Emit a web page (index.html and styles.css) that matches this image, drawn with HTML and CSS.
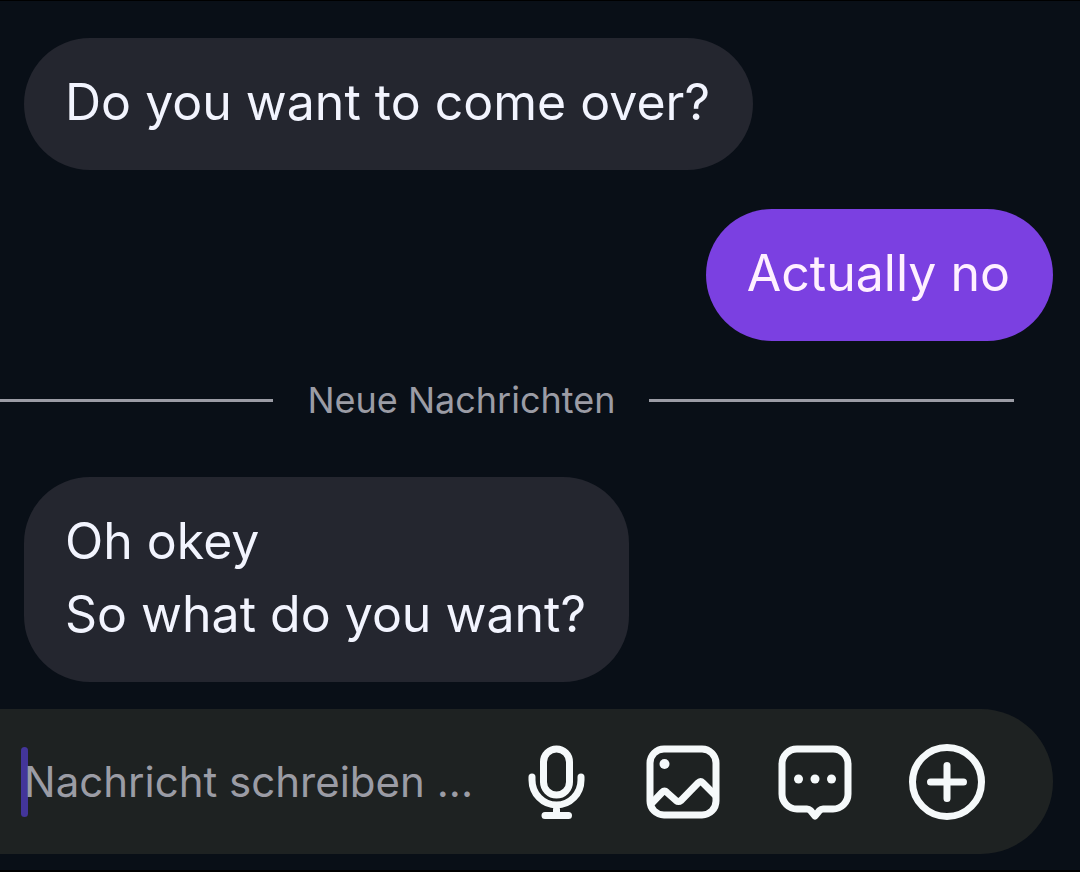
FILE: index.html
```html
<!DOCTYPE html>
<html lang="de">

<head>
    <meta charset="UTF-8">
    <meta name="viewport" content="width=device-width, initial-scale=1.0">
    <title>Chat</title>
    <link rel="stylesheet" href="styles.css">
</head>

<body>
    <main class="chat">
        <div class="message received">
            <p>Do you want to come over?</p>
        </div>
        <div class="message sent">
            <p>Actually no</p>
        </div>
        <div class="divider">
            <span>Neue Nachrichten</span>
        </div>
        <div class="message received">
            <p>Oh okey</p>
            <p>So what do you want?</p>
        </div>
    </main>
    <form class="composer">
        <div class="field">
            <span class="caret"></span>
            <input type="text" placeholder="Nachricht schreiben ..." aria-label="Nachricht schreiben">
        </div>
        <div class="actions">
            <button type="button" aria-label="Sprachnachricht">
                <svg width="64" height="76" viewBox="0 0 64 76">
                    <rect x="18.5" y="5" width="26" height="46" rx="13" />
                    <path d="M7 33v3a24.5 25 0 0 0 49 0v-3M31.5 61v10M20 71.5h23.5" />
                </svg>
            </button>
            <button type="button" aria-label="Bild">
                <svg width="76" height="76" viewBox="0 0 76 76">
                    <rect x="5" y="5" width="66" height="66" rx="14" />
                    <path d="M6 60L17 48.500q2.500-2.500 5 0L31 56.500q2.500 2 5 0L53 39q2.500-2.500 5 0L70 51" />
                    <circle class="dot" cx="19.5" cy="20" r="5" />
                </svg>
            </button>
            <button type="button" aria-label="Vorlagen">
                <svg width="76" height="76" viewBox="0 0 76 76">
                    <path d="M20 5h36a15 15 0 0 1 15 15v30a15 15 0 0 1-15 15H46q-2 0-3.500 1.500L38 72l-4.500-5.500Q32 65 30 65H20A15 15 0 0 1 5 50V20A15 15 0 0 1 20 5z" />
                    <circle class="dot" cx="21.5" cy="35" r="4.5" />
                    <circle class="dot" cx="38" cy="35" r="4.5" />
                    <circle class="dot" cx="54.5" cy="35" r="4.5" />
                </svg>
            </button>
            <button type="button" aria-label="Mehr">
                <svg width="76" height="76" viewBox="0 0 76 76">
                    <circle cx="38" cy="38" r="34.5" />
                    <path d="M38 21.500v33M21.500 38h33" />
                </svg>
            </button>
        </div>
    </form>
</body>

</html>
```

FILE: styles.css
```css
* {
    box-sizing: border-box;
}

body {
    margin: 0;
    min-height: 100vh;
    border-top: 1px solid #000;
    border-bottom: 2px solid #000;
    background-color: #090f17;
    color: #f2f4fe;
    font-family: Inter, "Liberation Sans", sans-serif;
}

.chat {
    display: flex;
    flex-direction: column;
    padding: 37px 27px 27px 24px;
}

.message {
    padding: 28px 43px 31px 41px;
    border-radius: 66px;
    font-size: 50px;
    line-height: 73px;
}

.message p {
    margin: 0;
}

.received {
    align-self: flex-start;
    background-color: #24262f;
}

.sent {
    align-self: flex-end;
    margin-top: 39px;
    background-color: #7b40e1;
    color: #fff0ff;
}

.divider {
    display: flex;
    align-items: center;
    gap: 34px;
    margin: 35px 39px 53px -24px;
    color: #9b9ca5;
    font-size: 36px;
    line-height: 48px;
}

.divider::before,
.divider::after {
    content: "";
    height: 3px;
    background-color: #9b9ca5;
}

.divider::before {
    flex: 3;
}

.divider::after {
    flex: 4;
}

.composer {
    display: flex;
    align-items: center;
    gap: 40px;
    height: 145px;
    margin-right: 27px;
    padding: 0 68px 0 24px;
    border-radius: 0 72px 72px 0;
    background-color: #1e2222;
}

.field {
    position: relative;
    flex: 1;
    min-width: 0;
}

/* sits half under the first letter */
.caret {
    position: absolute;
    top: 0;
    left: -3px;
    width: 7px;
    height: 70px;
    border-radius: 4px;
    background-color: #43359a;
}

.field input {
    position: relative;
    display: block;
    width: 100%;
    height: 70px;
    padding: 0;
    border: none;
    outline: none;
    background: transparent;
    color: #f2f4fe;
    font-family: inherit;
    font-size: 42px;
}

.field input::placeholder {
    color: #9b9ca5;
    opacity: 1;
}

.actions {
    display: flex;
    gap: 56px;
}

.actions button {
    padding: 0;
    border: none;
    background: none;
}

.actions svg {
    display: block;
    fill: none;
    stroke: #f5f9fa;
    stroke-width: 7;
    stroke-linecap: round;
    stroke-linejoin: round;
}

.actions .dot {
    fill: #f5f9fa;
    stroke: none;
}
```
